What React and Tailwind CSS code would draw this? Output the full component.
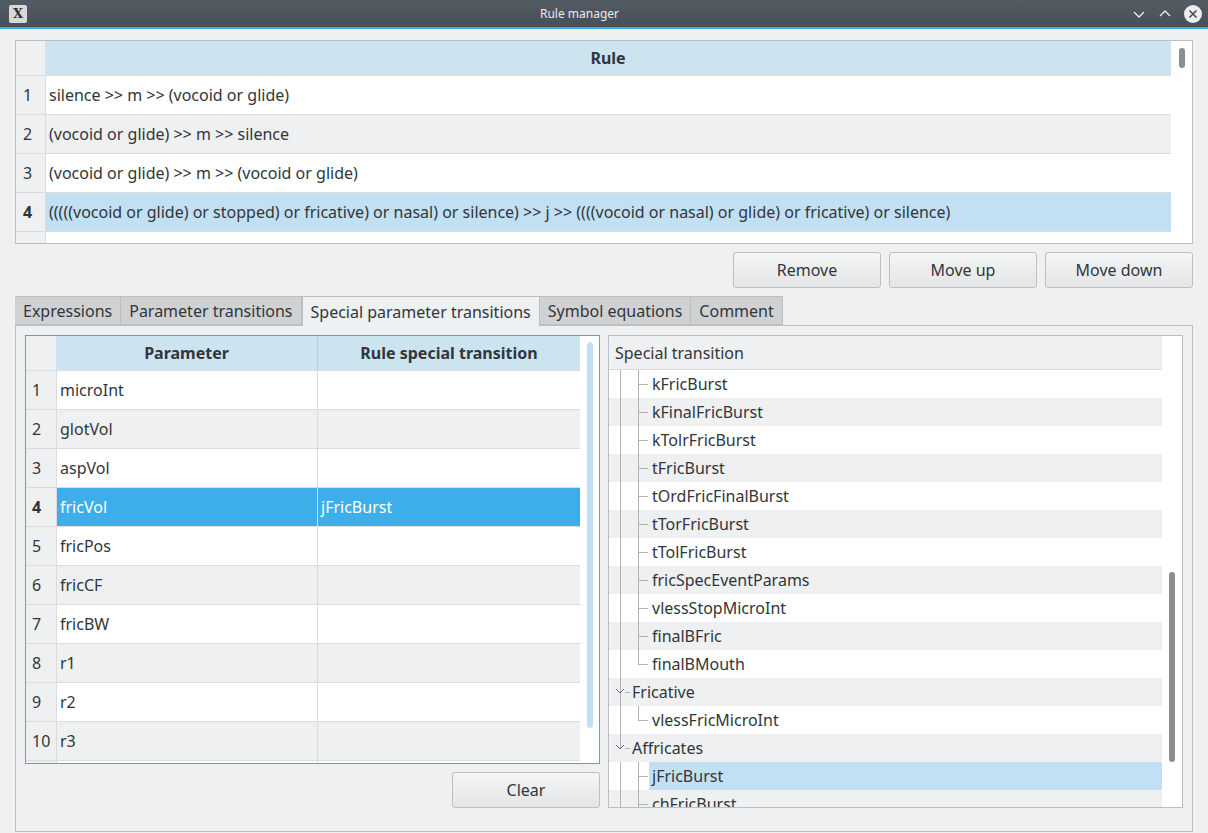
import React from "react";

const rules = [
  "silence >> m >> (vocoid or glide)",
  "(vocoid or glide) >> m >> silence",
  "(vocoid or glide) >> m >> (vocoid or glide)",
  "(((((vocoid or glide) or stopped) or fricative) or nasal) or silence) >> j >> ((((vocoid or nasal) or glide) or fricative) or silence)",
  "",
];
const params = ["microInt","glotVol","aspVol","fricVol","fricPos","fricCF","fricBW","r1","r2","r3","r4"];

const tree = [
  ["kFricBurst",2],["kFinalFricBurst",2],["kTolrFricBurst",2],["tFricBurst",2],["tOrdFricFinalBurst",2],
  ["tTorFricBurst",2],["tTolFricBurst",2],["fricSpecEventParams",2],["vlessStopMicroInt",2],["finalBFric",2],
  ["finalBMouth",2,"last"],["Fricative",1],["vlessFricMicroInt",2,"last"],["Affricates",1],["jFricBurst",2,"sel"],["chFricBurst",2],
];

function Btn({ children, w = "w-[148px]" }) {
  return (
    <div className={`${w} h-[36px] flex items-center justify-center rounded-[3px] border border-[#bcbebf] bg-gradient-to-b from-[#f4f5f5] to-[#e4e5e6] text-[16px] text-[#31363b]`}>
      {children}
    </div>
  );
}

export default function App() {
  return (
    <div className="w-[1208px] h-[833px] flex flex-col bg-[#eff0f1] overflow-hidden text-[#31363b]" style={{ fontFamily: '"Noto Sans", sans-serif' }}>
      <div className="h-[29px] shrink-0 flex items-center bg-gradient-to-b from-[#535c64] to-[#475057] border-b-2 border-[#3daee9] relative">
        <div className="ml-[9px] w-[18px] h-[18px] bg-[#d9d9d9] rounded-[2px] flex items-center justify-center text-[13px] font-bold text-[#333]" style={{ fontFamily: '"DejaVu Serif", serif' }}>X</div>
        <div className="flex-1 text-center text-[12px] text-[#e8eaec]">Rule manager</div>
        <div className="flex items-center gap-[12px] mr-[6px]">
          <svg width="14" height="14" viewBox="0 0 14 14"><path d="M2 5l5 5 5-5" stroke="#eee" strokeWidth="1.3" fill="none"/></svg>
          <svg width="14" height="14" viewBox="0 0 14 14"><path d="M2 9l5-5 5 5" stroke="#eee" strokeWidth="1.3" fill="none"/></svg>
          <svg width="18" height="18" viewBox="0 0 18 18"><circle cx="9" cy="9" r="9" fill="#eceeef"/><path d="M5.5 5.5l7 7M12.5 5.5l-7 7" stroke="#454b51" strokeWidth="1.6"/></svg>
        </div>
      </div>

      <div className="flex-1 flex flex-col px-[15px] pt-[11px]">
        <div className="h-[204px] border border-[#bcbebf] bg-white flex overflow-hidden">
          <div className="flex-1 flex flex-col">
            <div className="flex h-[34px] shrink-0">
              <div className="w-[29px] bg-[#eff0f1]" />
              <div className="flex-1 bg-[#cce3f0] flex items-center justify-center font-bold text-[16px]">Rule</div>
            </div>
            {rules.map((r, i) => {
              const sel = i === 3;
              return (
                <div key={i} className={`flex h-[39px] shrink-0 border-t border-[#dcdcdc] ${sel ? "bg-[#c2e0f4]" : i % 2 ? "bg-[#eff0f1]" : "bg-white"}`}>
                  <div className={`w-[29px] flex items-center pl-[7px] text-[16px] bg-[#eff0f1] ${sel ? "font-bold bg-[#c2e0f4]" : ""}`}>{r ? i + 1 : ""}</div>
                  <div className="flex-1 flex items-center pl-[3px] text-[16px] whitespace-nowrap border-l border-[#dcdcdc]">{r}</div>
                </div>
              );
            })}
          </div>
          <div className="w-[21px] bg-white flex justify-center pt-[7px]">
            <div className="w-[6px] h-[20px] rounded-full bg-[#8a8e91]" />
          </div>
        </div>

        <div className="flex justify-end gap-[8px] mt-[8px]">
          <Btn>Remove</Btn><Btn>Move up</Btn><Btn>Move down</Btn>
        </div>

        <div className="flex mt-[8px] h-[29px] text-[16px]">
          {["Expressions","Parameter transitions","Special parameter transitions","Symbol equations","Comment"].map((t, i) => (
            <div key={t} className={`px-[8px] flex items-center border border-[#bcbebf] ${i === 2 ? "bg-[#eff0f1] border-b-0 h-[30px] -mb-px relative z-10" : "bg-[#d0d1d2] border-l-0"} ${i === 0 ? "border-l" : ""}`}>{t}</div>
          ))}
        </div>
        <div className="h-[507px] border border-[#bcbebf] flex gap-[8px] px-[9px] pt-[9px]">
          <div className="w-[575px] flex flex-col">
            <div className="h-[429px] border border-[#3daee9] bg-white flex overflow-hidden">
              <div className="flex-1 flex flex-col overflow-hidden">
                <div className="flex h-[34px] shrink-0 font-bold text-[16px]">
                  <div className="w-[30px] bg-[#eff0f1]" />
                  <div className="w-[262px] bg-[#cce3f0] flex items-center justify-center border-r border-[#bcd1de]">Parameter</div>
                  <div className="flex-1 bg-[#cce3f0] flex items-center justify-center">Rule special transition</div>
                </div>
                {params.map((p, i) => {
                  const sel = i === 3;
                  return (
                    <div key={p} className={`flex h-[39px] shrink-0 border-t border-[#dcdcdc] text-[16px] ${sel ? "bg-[#3daee9] text-white" : i % 2 ? "bg-[#eff0f1]" : "bg-white"}`}>
                      <div className={`w-[30px] flex items-center pl-[6px] bg-[#eff0f1] text-[#31363b] ${sel ? "font-bold bg-[#c2e0f4]" : ""}`}>{i + 1}</div>
                      <div className="w-[262px] flex items-center pl-[3px] border-l border-r border-[#dcdcdc]">{p}</div>
                      <div className="flex-1 flex items-center pl-[3px]">{sel ? "jFricBurst" : ""}</div>
                    </div>
                  );
                })}
              </div>
              <div className="w-[19px] bg-white flex justify-center pt-[6px]">
                <div className="w-[6px] h-[386px] rounded-full bg-[#c2e0f4]" />
              </div>
            </div>
            <div className="flex justify-end mt-[8px]"><Btn>Clear</Btn></div>
          </div>

          <div className="w-[575px] h-[473px] border border-[#bcbebf] bg-white flex overflow-hidden">
            <div className="flex-1 flex flex-col overflow-hidden">
              <div className="h-[34px] shrink-0 bg-[#eff0f1] flex items-center pl-[6px] text-[16px] border-b border-[#dcdcdc]">Special transition</div>
              {tree.map(([t, lvl, f], i) => {
                const sel = f === "sel";
                return (
                  <div key={t} className={`relative h-[28px] shrink-0 flex items-center text-[16px] ${i % 2 ? "bg-[#eff0f1]" : "bg-white"}`}>
                    <div className="absolute left-[11px] top-0 bottom-0 border-l border-[#b0b2b4]" style={{ bottom: i === tree.length - 3 ? "14px" : 0 }} />
                    {lvl === 2 && (
                      <>
                        <div className="absolute left-[29px] top-0 border-l border-[#b0b2b4]" style={{ bottom: f === "last" ? "14px" : 0 }} />
                        <div className="absolute left-[29px] top-[14px] w-[10px] border-t border-[#b0b2b4]" />
                      </>
                    )}
                    {lvl === 1 && (
                      <>
                        <svg className="absolute left-[6px] top-[9px]" width="10" height="8" viewBox="0 0 10 8"><path d="M1 2l4 4 4-4" stroke="#6b6f73" strokeWidth="1" fill="none"/></svg>
                        <div className="absolute left-[16px] top-[14px] w-[5px] border-t border-[#b0b2b4]" />
                      </>
                    )}
                    <div className={`h-full flex items-center ${lvl === 2 ? "ml-[40px] pl-[3px]" : "ml-[22px] pl-[1px]"} ${sel ? "bg-[#c2e0f4] flex-1" : ""}`}>{t}</div>
                  </div>
                );
              })}
            </div>
            <div className="w-[20px] bg-white flex justify-center pt-[236px]">
              <div className="w-[6px] h-[190px] rounded-full bg-[#8a8e91]" />
            </div>
          </div>
        </div>
      </div>
    </div>
  );
}
